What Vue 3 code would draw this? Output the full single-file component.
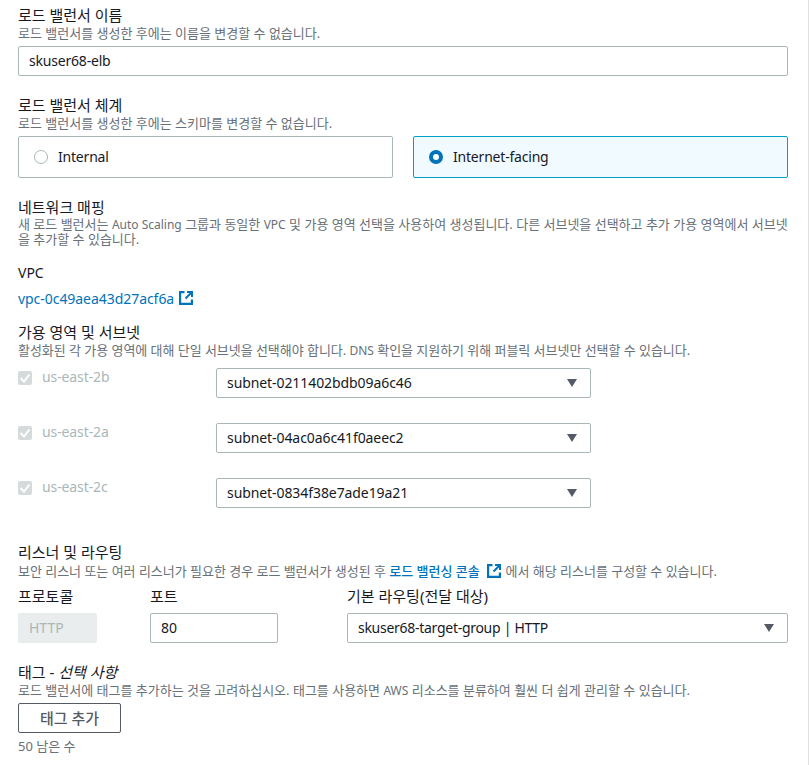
<script setup>
const zones = [
  { az: 'us-east-2b', subnet: 'subnet-0211402bdb09a6c46' },
  { az: 'us-east-2a', subnet: 'subnet-04ac0a6c41f0aeec2' },
  { az: 'us-east-2c', subnet: 'subnet-0834f38e7ade19a21' },
]
</script>

<template>
  <div class="frame">
    <div class="page">
      <section class="name-block">
        <div class="label">로드 밸런서 이름</div>
        <div class="desc">로드 밸런서를 생성한 후에는 이름을 변경할 수 없습니다.</div>
        <div class="field name-field">skuser68-elb</div>
      </section>

      <section class="scheme-block">
        <div class="label">로드 밸런서 체계</div>
        <div class="desc">로드 밸런서를 생성한 후에는 스키마를 변경할 수 없습니다.</div>
        <div class="scheme-cards">
          <div class="card">
            <span class="radio" />
            <span>Internal</span>
          </div>
          <div class="card selected">
            <span class="radio on" />
            <span>Internet-facing</span>
          </div>
        </div>
      </section>

      <section class="network-block">
        <div class="label">네트워크 매핑</div>
        <div class="desc wrap">새 로드 밸런서는 <span class="latin">Auto Scaling</span> 그룹과 동일한 <span class="latin">VPC</span> 및 가용 영역 선택을 사용하여 생성됩니다. 다른 서브넷을 선택하고 추가 가용 영역에서 서브넷<br>을 추가할 수 있습니다.</div>
        <div class="label vpc-label">VPC</div>
        <div class="vpc-link">
          <span>vpc-0c49aea43d27acf6a</span>
          <svg class="ext" viewBox="0 0 14 14" width="14" height="14">
            <path d="M5.500 1.100H1.100v11.800h11.800V8.500" fill="none" stroke="#0073bb" stroke-width="2.200" />
            <path d="M8 1h5v5M12.500 1.500 6.500 7.500" fill="none" stroke="#0073bb" stroke-width="2" />
          </svg>
        </div>
      </section>

      <section class="zones-block">
        <div class="label">가용 영역 및 서브넷</div>
        <div class="desc zones-desc">활성화된 각 가용 영역에 대해 단일 서브넷을 선택해야 합니다. <span class="latin">DNS</span> 확인을 지원하기 위해 퍼블릭 서브넷만 선택할 수 있습니다.</div>
        <div class="zone-list">
          <div v-for="z in zones" :key="z.az" class="zone-row">
            <div class="zone-check">
              <span class="check">
                <svg viewBox="0 0 14 14" width="14" height="14">
                  <path d="M2.500 7 6 10.500 11.500 3.500" fill="none" stroke="#fff" stroke-width="2" />
                </svg>
              </span>
              <span class="zone-name">{{ z.az }}</span>
            </div>
            <div class="field select subnet">
              <span>{{ z.subnet }}</span>
              <span class="caret" />
            </div>
          </div>
        </div>
      </section>

      <section class="listener-block">
        <div class="label">리스너 및 라우팅</div>
        <div class="desc listener-desc">
          <span>보안 리스너 또는 여러 리스너가 필요한 경우 로드 밸런서가 생성된 후 </span>
          <span class="console-link">로드 밸런싱 콘솔</span>
          <svg class="ext inline" viewBox="0 0 14 14" width="14" height="14">
            <path d="M5.500 1.100H1.100v11.800h11.800V8.500" fill="none" stroke="#0073bb" stroke-width="2.200" />
            <path d="M8 1h5v5M12.500 1.500 6.500 7.500" fill="none" stroke="#0073bb" stroke-width="2" />
          </svg>
          <span>에서 해당 리스너를 구성할 수 있습니다.</span>
        </div>
        <div class="listener-grid">
          <div class="col-proto">
            <div class="label">프로토콜</div>
            <div class="field disabled">HTTP</div>
          </div>
          <div class="col-port">
            <div class="label">포트</div>
            <div class="field">80</div>
          </div>
          <div class="col-route">
            <div class="label">기본 라우팅(전달 대상)</div>
            <div class="field select route">
              <span>skuser68-target-group | HTTP</span>
              <span class="caret" />
            </div>
          </div>
        </div>
      </section>

      <section class="tags-block">
        <div class="label">태그 - <em>선택 사항</em></div>
        <div class="desc">로드 밸런서에 태그를 추가하는 것을 고려하십시오. 태그를 사용하면 <span class="latin">AWS</span> 리소스를 분류하여 훨씬 더 쉽게 관리할 수 있습니다.</div>
        <button class="add-tag">태그 추가</button>
        <div class="remain">50 남은 수</div>
      </section>
    </div>
  </div>
</template>

<style>
html, body {
  margin: 0;
  background: #fff;
}
</style>

<style scoped>
.frame {
  width: 812px;
  height: 765px;
  overflow: hidden;
}
.page {
  box-sizing: border-box;
  width: 809px;
  height: 765px;
  padding: 6px 20px 0 18px;
  border-right: 1px solid #dfe2e2;
  font-family: "Noto Sans", "Noto Sans CJK KR", sans-serif;
  font-size: 14px;
  color: #16191f;
}
.label {
  font-size: 15px;
  line-height: 18px;
  white-space: nowrap;
}
.label em {
  font-style: italic;
}
.vpc-label {
  font-size: 14px;
  margin-top: 17px;
}
.desc {
  font-size: 13px;
  line-height: 16px;
  color: #687078;
  margin-top: 1px;
  white-space: nowrap;
}
.desc.wrap {
  line-height: 15px;
}
.zones-desc {
  letter-spacing: -0.04px;
}
.latin {
  font-size: 12px;
  line-height: 1;
}
.field {
  box-sizing: border-box;
  height: 30px;
  display: flex;
  align-items: center;
  padding: 0 10px 2px;
  border: 1px solid #aab7b8;
  border-radius: 2px;
  background: #fff;
  white-space: nowrap;
}
.name-field {
  margin-top: 5px;
  letter-spacing: -0.2px;
}
.scheme-block {
  margin-top: 20px;
}
.scheme-cards {
  display: flex;
  gap: 20px;
  margin-top: 5px;
}
.card {
  box-sizing: border-box;
  flex: 1;
  height: 42px;
  display: flex;
  align-items: center;
  gap: 10px;
  padding: 0 15px;
  border: 1px solid #aab7b8;
  border-radius: 2px;
  letter-spacing: -0.2px;
}
.card span:last-child {
  margin-top: -2px;
}
.card.selected {
  border-color: #00a1c9;
  background: #f1faff;
}
.radio {
  box-sizing: border-box;
  width: 14px;
  height: 14px;
  border: 1px solid #aab7b8;
  border-radius: 50%;
  background: #fff;
}
.radio.on {
  border: 4.500px solid #0073bb;
}
.network-block {
  margin-top: 20px;
}
.vpc-link {
  display: flex;
  align-items: center;
  gap: 5px;
  margin-top: 6px;
  height: 20px;
  color: #0073bb;
  letter-spacing: -0.05px;
}
.zones-block {
  margin-top: 15px;
}
.zone-list {
  display: flex;
  flex-direction: column;
  gap: 25px;
  margin-top: 10px;
}
.zone-row {
  display: flex;
  height: 30px;
}
.zone-check {
  width: 198px;
  display: flex;
  align-items: flex-start;
  gap: 10px;
  color: #aab7b8;
  letter-spacing: -0.1px;
}
.check {
  width: 14px;
  height: 14px;
  margin-top: 3px;
  border-radius: 2px;
  background: #d5dbdb;
  display: flex;
}
.zone-name {
  line-height: 18px;
}
.select {
  justify-content: space-between;
}
.subnet {
  width: 375px;
  letter-spacing: -0.08px;
}
.route {
  letter-spacing: -0.28px;
}
.caret {
  width: 0;
  height: 0;
  margin: 2px 3px 0 0;
  border-left: 5px solid transparent;
  border-right: 5px solid transparent;
  border-top: 8px solid #545b64;
}
.listener-block {
  margin-top: 35px;
}
.listener-desc {
  display: flex;
  align-items: center;
  white-space: pre;
  margin-top: 2px;
  letter-spacing: -0.02px;
}
.console-link {
  color: #0073bb;
  font-weight: 500;
}
.ext.inline {
  margin: 0 5px 0 7px;
}
.listener-grid {
  display: flex;
  margin-top: 8px;
}
.listener-grid .field {
  margin-top: 8px;
}
.col-proto {
  width: 132px;
}
.col-proto .field {
  width: 79px;
}
.col-port {
  width: 197px;
}
.col-port .field {
  width: 128px;
}
.col-route {
  flex: 1;
}
.disabled {
  border-color: #eaeded;
  background: #eaeded;
  color: #aab7b8;
}
.tags-block {
  margin-top: 20px;
}
.add-tag {
  display: block;
  box-sizing: border-box;
  width: 103px;
  height: 30px;
  margin-top: 5px;
  padding: 0 0 2px;
  border: 1px solid #545b64;
  border-radius: 2px;
  background: #fff;
  color: #545b64;
  font-family: inherit;
  font-size: 15px;
  font-weight: 500;
}
.remain {
  margin-top: 5px;
  font-size: 13px;
  line-height: 16px;
  color: #687078;
}
</style>
